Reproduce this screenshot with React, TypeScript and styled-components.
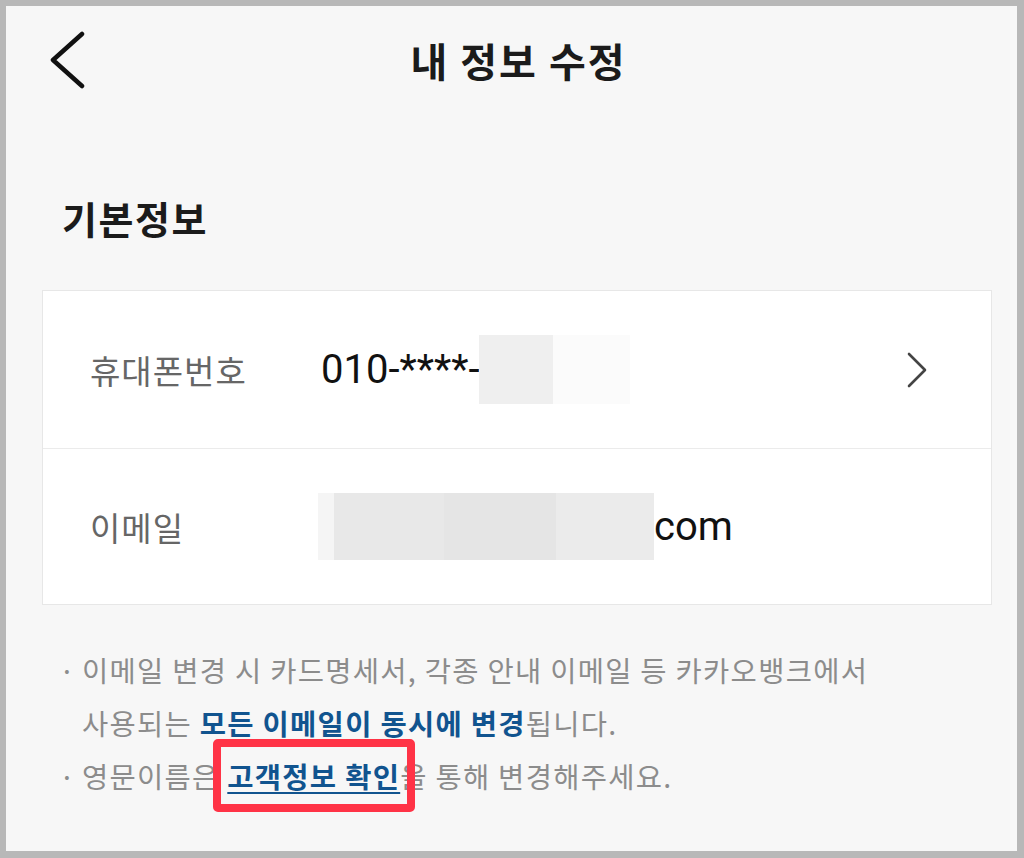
import React from "react";
import styled, { createGlobalStyle } from "styled-components";

const Global = createGlobalStyle`
  html, body { margin: 0; padding: 0; }
  body {
    width: 1024px;
    height: 858px;
    overflow: hidden;
    font-family: "Noto Sans CJK KR", "Noto Sans", sans-serif;
    background: #b8b8b8;
  }
  * { box-sizing: border-box; }
`;

const Frame = styled.div`
  width: 1024px;
  height: 858px;
  border-style: solid;
  border-color: #b8b8b8;
  border-width: 6px 7px 7px 6px;
  background: #f7f7f7;
  display: flex;
  flex-direction: column;
`;

const Header = styled.header`
  height: 108px;
  display: grid;
  grid-template-columns: 120px 1fr 120px;
  align-items: center;
`;

const BackButton = styled.button`
  border: 0;
  background: none;
  padding: 0 0 0 44px;
  height: 60px;
  display: flex;
  align-items: center;
  cursor: pointer;
`;

const Title = styled.h1`
  margin: 0;
  text-align: center;
  font-size: 40px;
  font-weight: 700;
  color: #1b1b1b;
  letter-spacing: 2px;
  padding-left: 14px;
`;

const SectionTitle = styled.h2`
  margin: 79px 0 0 0;
  padding-left: 56px;
  height: 50px;
  line-height: 50px;
  font-size: 38px;
  font-weight: 700;
  color: #1b1b1b;
  letter-spacing: 1.5px;
`;

const Card = styled.section`
  margin: 47px 25px 0 36px;
  background: #ffffff;
  border: 1px solid #e7e7e7;
`;

const Row = styled.div<{ $h: number; $divider?: boolean }>`
  height: ${(p) => p.$h}px;
  display: flex;
  align-items: center;
  padding: 0 62px 0 47px;
  border-top: ${(p) => (p.$divider ? "1px solid #ebebeb" : "0")};
`;

const Label = styled.div`
  width: 228px;
  flex: none;
  font-size: 33px;
  color: #666666;
  letter-spacing: 1px;
`;

const Value = styled.div`
  flex: 1;
  display: flex;
  align-items: center;
  font-family: "Roboto", "Noto Sans CJK KR", sans-serif;
  font-size: 40px;
  color: #111111;
`;

const ValueText = styled.span<{ $offset?: number }>`
  margin-left: ${(p) => p.$offset ?? 0}px;
`;

const Mask = styled.span<{ $w: number; $c: string; $h: number }>`
  display: inline-block;
  width: ${(p) => p.$w}px;
  height: ${(p) => p.$h}px;
  background: ${(p) => p.$c};
`;

const Chevron = styled.svg`
  flex: none;
`;

const Notes = styled.ul`
  list-style: none;
  margin: 38px 0 0 0;
  padding: 0 0 0 53px;
  font-size: 28.5px;
  line-height: 53px;
  letter-spacing: 1.3px;
  color: #8c8c8c;
`;

const Note = styled.li`
  display: flex;
`;

const Dot = styled.span`
  width: 23px;
  flex: none;
`;

const Strong = styled.strong`
  color: #11548f;
  font-weight: 700;
`;

const Highlight = styled.span`
  position: relative;
  display: inline-block;
  &::after {
    content: "";
    position: absolute;
    top: -10px;
    bottom: -10px;
    left: -14px;
    right: -15px;
    border: 8px solid #ff3346;
    border-radius: 5px;
    pointer-events: none;
  }
`;

const LinkText = styled.a`
  color: #11548f;
  font-weight: 700;
  text-decoration: underline;
  text-decoration-thickness: 2px;
  text-underline-offset: 4px;
`;

export default function App() {
  return (
    <>
      <Global />
      <Frame>
        <Header>
          <BackButton aria-label="뒤로">
            <svg width="36" height="58" viewBox="0 0 36 58">
              <polyline
                points="32,3 3,29 32,55"
                fill="none"
                stroke="#111"
                strokeWidth="4.5"
                strokeLinecap="round"
                strokeLinejoin="round"
              />
            </svg>
          </BackButton>
          <Title>내 정보 수정</Title>
          <div />
        </Header>
        <SectionTitle>기본정보</SectionTitle>
        <Card>
          <Row $h={157}>
            <Label>휴대폰번호</Label>
            <Value>
              <ValueText $offset={3}>010-****-</ValueText>
              <Mask $w={74} $h={69} $c="#efefef" />
              <Mask $w={77} $h={69} $c="#fbfbfb" />
            </Value>
            <Chevron width="24" height="38" viewBox="0 0 24 38">
              <polyline
                points="4,3 20,19 4,35"
                fill="none"
                stroke="#444"
                strokeWidth="2.6"
                strokeLinecap="round"
                strokeLinejoin="round"
              />
            </Chevron>
          </Row>
          <Row $h={156} $divider>
            <Label>이메일</Label>
            <Value>
              <Mask $w={16} $h={67} $c="#f5f5f5" />
              <Mask $w={110} $h={67} $c="#e8e8e8" />
              <Mask $w={112} $h={67} $c="#e5e5e5" />
              <Mask $w={98} $h={67} $c="#ebebeb" />
              <ValueText>com</ValueText>
            </Value>
          </Row>
        </Card>
        <Notes>
          <Note>
            <Dot>·</Dot>
            <span>
              이메일 변경 시 카드명세서, 각종 안내 이메일 등 카카오뱅크에서
              <br />
              사용되는 <Strong>모든 이메일이 동시에 변경</Strong>됩니다.
            </span>
          </Note>
          <Note>
            <Dot>·</Dot>
            <span>
              영문이름은{" "}
              <Highlight>
                <LinkText>고객정보 확인</LinkText>
              </Highlight>
              을 통해 변경해주세요.
            </span>
          </Note>
        </Notes>
      </Frame>
    </>
  );
}
